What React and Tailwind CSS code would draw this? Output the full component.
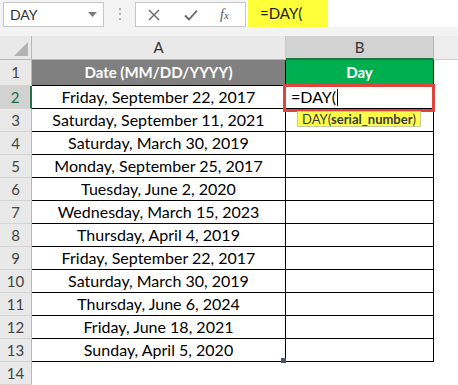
import React from "react";

const dates = [
  "Friday, September 22, 2017",
  "Saturday, September 11, 2021",
  "Saturday, March 30, 2019",
  "Monday, September 25, 2017",
  "Tuesday, June 2, 2020",
  "Wednesday, March 15, 2023",
  "Thursday, April 4, 2019",
  "Friday, September 22, 2017",
  "Saturday, March 30, 2019",
  "Thursday, June 6, 2024",
  "Friday, June 18, 2021",
  "Sunday, April 5, 2020",
];

const font = { fontFamily: "Lato, 'Liberation Sans', sans-serif" };

function RowHead({ n, selected }) {
  return (
    <div
      className={
        "w-[32px] shrink-0 flex items-center justify-center text-[15px] border-b border-b-[#d4d4d4] " +
        (selected
          ? "bg-[#d2d2d2] text-[#1e6b41] border-r-2 border-r-[#217346]"
          : "bg-[#e9e9e9] text-[#444] border-r border-r-[#b8b8b8]")
      }
    >
      {n}
    </div>
  );
}

export default function App() {
  return (
    <div className="relative w-[458px] h-[385px] overflow-hidden bg-white text-black" style={font}>
      {/* toolbar */}
      <div className="h-[36px] bg-[#f3f3f3] flex items-start">
        <div className="mt-[2px] ml-[3px] w-[101px] h-[25px] bg-white border border-[#c6c6c6] flex items-center justify-between pl-[6px] pr-[6px] text-[14px] text-[#333]">
          <span>DAY</span>
          <svg width="9" height="5" viewBox="0 0 9 5">
            <path d="M0 0 L9 0 L4.5 5 Z" fill="#7a7a7a" />
          </svg>
        </div>
        <div className="w-[31px] h-[27px] flex flex-col items-center justify-center gap-[3px]">
          <div className="w-[2px] h-[2px] bg-[#b0b0b0]" />
          <div className="w-[2px] h-[2px] bg-[#b0b0b0]" />
          <div className="w-[2px] h-[2px] bg-[#b0b0b0]" />
        </div>
        <div className="mt-[2px] w-[111px] h-[25px] bg-white border border-[#c6c6c6] flex items-center">
          <svg className="ml-[12px]" width="12" height="12" viewBox="0 0 12 12">
            <path d="M1 1 L11 11 M11 1 L1 11" stroke="#666" strokeWidth="1.4" fill="none" />
          </svg>
          <svg className="ml-[24px]" width="14" height="12" viewBox="0 0 14 12">
            <path d="M1 6.5 L5 10.5 L13 1.5" stroke="#666" strokeWidth="1.8" fill="none" />
          </svg>
          <span
            className="ml-[22px] text-[14px] italic text-[#555]"
            style={{ fontFamily: "'Liberation Serif', serif" }}
          >
            f<span className="text-[11px]">x</span>
          </span>
        </div>
        <div className="flex-1 h-[27px] bg-white flex items-stretch">
          <div className="ml-[2px] w-[80px] bg-[#ffff3a] flex items-center pl-[12px] text-[15px] text-[#222]">
            =DAY(
          </div>
        </div>
      </div>

      {/* column headers */}
      <div className="flex h-[24px]">
        <div className="w-[32px] shrink-0 bg-[#e9e9e9] border-r border-[#b8b8b8] border-b border-b-[#b8b8b8] relative">
          <svg className="absolute right-[3px] bottom-[3px]" width="14" height="14" viewBox="0 0 14 14">
            <path d="M14 0 L14 14 L0 14 Z" fill="#b4b4b4" />
          </svg>
        </div>
        <div className="w-[254px] shrink-0 bg-[#e9e9e9] border-r border-[#c8c8c8] border-b border-b-[#b8b8b8] flex items-center justify-center text-[15px] text-[#333]">
          A
        </div>
        <div className="w-[148px] shrink-0 bg-[#d2d2d2] border-r border-[#b8b8b8] border-b-2 border-b-[#217346] flex items-center justify-center text-[15px] text-[#333]">
          B
        </div>
        <div className="flex-1 bg-[#ededed] border-b border-b-[#d0d0d0]" />
      </div>

      {/* row 1 */}
      <div className="flex h-[26px]">
        <RowHead n={1} />
        <div className="w-[254px] shrink-0 bg-[#808080] border-r border-b border-black flex items-center justify-center text-white font-bold text-[15px]">
          Date (MM/DD/YYYY)
        </div>
        <div className="w-[148px] shrink-0 bg-[#00b050] border-r border-b border-black flex items-center justify-center text-white font-bold text-[15px]">
          Day
        </div>
        <div className="flex-1" />
      </div>

      {dates.map((d, i) => (
        <div key={i} className="flex h-[23px]">
          <RowHead n={i + 2} selected={i === 0} />
          <div className="w-[254px] shrink-0 border-r border-b border-black flex items-center justify-center text-[16px]">
            {d}
          </div>
          <div className="w-[148px] shrink-0 border-r border-b border-black flex items-center pl-[5px] text-[16px]">
            {i === 0 ? (
              <span className="flex items-center">
                =DAY(
                <span className="w-[1px] h-[17px] bg-black ml-[1px]" />
              </span>
            ) : null}
          </div>
          <div className="flex-1" />
        </div>
      ))}

      {/* row 14 */}
      <div className="flex h-[23px]">
        <RowHead n={14} />
        <div className="flex-1" />
      </div>

      {/* active cell red border */}
      <div className="absolute left-[283px] top-[84px] w-[152px] h-[28px] border-[3px] border-[#e0443f]" />

      {/* tooltip */}
      <div className="absolute left-[297px] top-[111px] h-[16px] px-[4px] bg-[#ffff4a] border border-[#c9c9a0] flex items-center text-[13px] text-[#3a3a3a] leading-none">
        DAY(<span className="font-bold">serial_number</span>)
      </div>

      {/* fill handle */}
      <div className="absolute left-[281px] top-[358px] w-[5px] h-[5px] bg-[#4b5468]" />
    </div>
  );
}
